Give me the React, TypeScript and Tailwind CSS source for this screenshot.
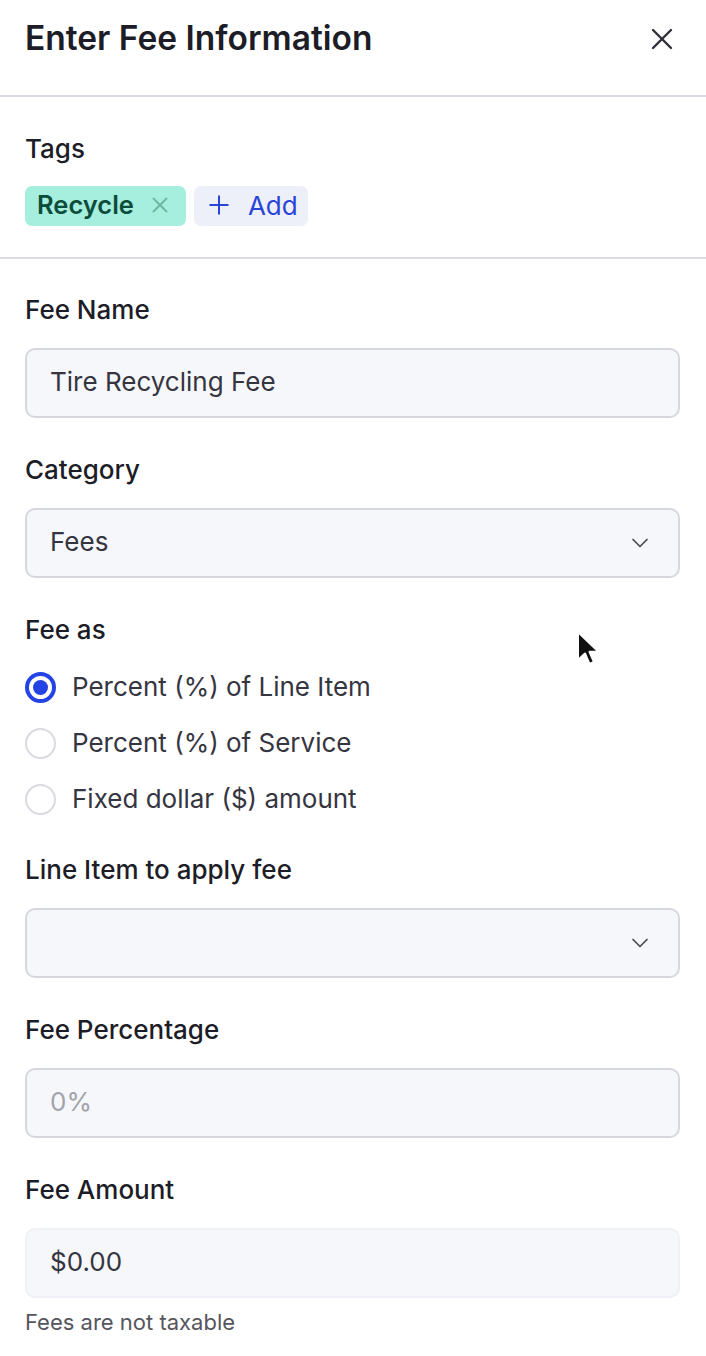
import { X, Plus, ChevronDown } from 'lucide-react';

const font = { fontFamily: 'Inter, "Noto Sans", sans-serif' };

function Label({ children }: { children: React.ReactNode }) {
  return <div className="h-8 pb-[2px] text-[26px] font-medium leading-[30px] text-[#1d1d27]">{children}</div>;
}

function Field({ label, children }: { label: string; children: React.ReactNode }) {
  return (
    <div className="mb-[37px]">
      <Label>{label}</Label>
      <div className="mt-[21px]">{children}</div>
    </div>
  );
}

function Input({ value, muted, borderless }: { value: string; muted?: boolean; borderless?: boolean }) {
  return (
    <div
      className={`flex h-[70px] items-center rounded-[10px] bg-[#f6f7fb] pb-[3px] pl-[23px] pr-[25px] text-[26px] ${
        borderless ? 'border-2 border-[#f0f1f6]' : 'border-2 border-[#d7d7e0]'
      } ${muted ? 'text-[#a3a3ab]' : 'text-[#35353f]'}`}
    >
      {value}
    </div>
  );
}

function Select({ value }: { value?: string }) {
  return (
    <div className="flex h-[70px] items-center justify-between rounded-[10px] border-2 border-[#d7d7e0] bg-[#f6f7fb] pl-[23px] pr-[24px] text-[26px] text-[#35353f]">
      <span className="pb-[3px]">{value}</span>
      <ChevronDown className="h-[28px] w-[28px] text-[#4a4a55]" strokeWidth={1.5} />
    </div>
  );
}

function Radio({ label, checked }: { label: string; checked?: boolean }) {
  return (
    <div className="flex h-14 items-center gap-[16px]">
      {checked ? (
        <span className="flex h-[31px] w-[31px] items-center justify-center rounded-full border-[4px] border-[#2343e4] bg-white">
          <span className="h-[15px] w-[15px] rounded-full bg-[#2343e4]" />
        </span>
      ) : (
        <span className="h-[31px] w-[31px] rounded-full border-2 border-[#dadae2] bg-white" />
      )}
      <span className="pb-[2px] text-[26px] text-[#35353f]">{label}</span>
    </div>
  );
}

export default function App() {
  return (
    <div className="relative min-h-[1356px] w-[706px] bg-white" style={font}>
      <div className="flex h-[95px] items-start justify-between pl-[25px] pr-[26px] pt-[18px]">
        <h1 className="text-[33.5px] font-semibold leading-10 text-[#1d1d27]">Enter Fee Information</h1>
        <X className="mt-[3px] h-[36px] w-[36px] text-[#2f2f38]" strokeWidth={1.6} />
      </div>
      <div className="h-[2px] bg-[#dcdbe5]" />

      <div className="px-[25px] pb-[31px] pt-[37px]">
        <Label>Tags</Label>
        <div className="mt-[20px] flex gap-[8px]">
          <div className="flex h-10 items-center gap-[13px] rounded-[7px] bg-[#a6eedd] pb-[2px] pl-[12px] pr-[13px]">
            <span className="text-[25.5px] font-semibold text-[#0b4d3a]">Recycle</span>
            <X className="h-[26px] w-[26px] text-[#6fb79f]" strokeWidth={1.8} />
          </div>
          <div className="flex h-10 items-center gap-[14px] rounded-[7px] bg-[#eef0f9] pb-[2px] pl-[10px] pr-[10px]">
            <Plus className="h-[30px] w-[30px] text-[#2945d8]" strokeWidth={1.6} />
            <span className="text-[26px] text-[#2945d8]">Add</span>
          </div>
        </div>
      </div>
      <div className="h-[2px] bg-[#dcdbe5]" />

      <div className="pl-[25px] pr-[26px] pt-[36px]">
        <Field label="Fee Name">
          <Input value="Tire Recycling Fee" />
        </Field>
        <Field label="Category">
          <Select value="Fees" />
        </Field>
        <div className="mb-[28px]">
          <Label>Fee as</Label>
          <div className="mt-[12px]">
            <Radio label="Percent (%) of Line Item" checked />
            <Radio label="Percent (%) of Service" />
            <Radio label="Fixed dollar ($) amount" />
          </div>
        </div>
        <Field label="Line Item to apply fee">
          <Select />
        </Field>
        <Field label="Fee Percentage">
          <Input value="0%" muted />
        </Field>
        <div>
          <Label>Fee Amount</Label>
          <div className="mt-[21px]">
            <Input value="$0.00" borderless />
          </div>
          <div className="mt-[8px] text-[22px] text-[#55555e]">Fees are not taxable</div>
        </div>
      </div>

      <svg className="absolute left-[576px] top-[630px]" width="24" height="38" viewBox="0 0 24 38">
        <path d="M2 2 L2 30 L9 23.5 L13.5 34 L18 32 L13.5 21.8 L22.5 21.8 Z" fill="#111" stroke="#fff" strokeWidth="2" strokeLinejoin="round" />
      </svg>
    </div>
  );
}
